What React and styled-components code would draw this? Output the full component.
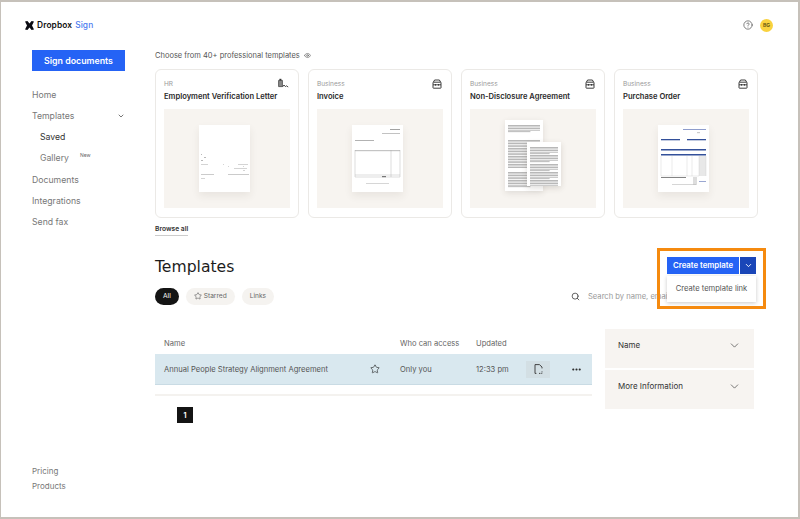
import React from "react"
import styled, { createGlobalStyle } from "styled-components"
import { ChevronDown, CircleHelp, Ellipsis, Eye, Search, Star } from "lucide-react"

const cards = [
  { category: "HR", title: "Employment Verification Letter", icon: "hr", doc: "letter" },
  { category: "Business", title: "Invoice", icon: "bag", doc: "invoice" },
  { category: "Business", title: "Non-Disclosure Agreement", icon: "bag", doc: "nda" },
  { category: "Business", title: "Purchase Order", icon: "bag", doc: "order" },
]

const App = () => {
  return (
    <Page>
      <GlobalStyle />
      <Header>
        <Logo>
          <LogoMark />
          <LogoName>Dropbox</LogoName>
          <LogoSign>Sign</LogoSign>
        </Logo>
        <HeaderRight>
          <CircleHelp size={10} strokeWidth={1.6} color="#444" />
          <Avatar>BG</Avatar>
        </HeaderRight>
      </Header>

      <Body>
        <Sidebar>
          <SignButton>Sign documents</SignButton>
          <Nav>
            <NavItem>Home</NavItem>
            <NavItem>
              Templates
              <NavChevron>
                <ChevronDown size={8} strokeWidth={2.2} color="#444" />
              </NavChevron>
            </NavItem>
            <NavItem $sub $active>Saved</NavItem>
            <NavItem $sub>
              Gallery<NewTag>New</NewTag>
            </NavItem>
            <NavItem>Documents</NavItem>
            <NavItem>Integrations</NavItem>
            <NavItem>Send fax</NavItem>
          </Nav>
          <SideFooter>
            <FootLink>Pricing</FootLink>
            <FootLink>Products</FootLink>
          </SideFooter>
        </Sidebar>

        <Main>
          <Intro>
            Choose from 40+ professional templates
            <Eye size={7} strokeWidth={2} color="#555" />
          </Intro>
          <Cards>
            {cards.map((card) => (
              <Card key={card.title}>
                <CardTop>
                  <Category>{card.category}</Category>
                  {card.icon === "hr" ? <HrIcon /> : <BagIcon />}
                </CardTop>
                <CardTitle>{card.title}</CardTitle>
                <Preview>
                  {card.doc === "letter" && <LetterDoc />}
                  {card.doc === "invoice" && <InvoiceDoc />}
                  {card.doc === "nda" && <NdaDocs />}
                  {card.doc === "order" && <OrderDoc />}
                </Preview>
              </Card>
            ))}
          </Cards>
          <BrowseRow>
            <BrowseAll>Browse all</BrowseAll>
          </BrowseRow>

          <TitleRow>
            <PageTitle>Templates</PageTitle>
            <CreateGroup>
              <CreateButton>Create template</CreateButton>
              <CreateToggle>
                <ChevronDown size={9} strokeWidth={2.4} color="#fff" />
              </CreateToggle>
              <CreateMenu>Create template link</CreateMenu>
              <Highlight />
            </CreateGroup>
          </TitleRow>

          <FilterRow>
            <Pills>
              <Pill $active>All</Pill>
              <Pill>
                <Star size={8} strokeWidth={1.8} color="#555" />
                Starred
              </Pill>
              <Pill>Links</Pill>
            </Pills>
            <SearchBox>
              <Search size={9} strokeWidth={2.2} color="#444" />
              <SearchText>Search by name, email</SearchText>
            </SearchBox>
          </FilterRow>

          <Content>
            <TableArea>
              <TableHead>
                <NameCol>Name</NameCol>
                <StarCol />
                <AccessCol>Who can access</AccessCol>
                <UpdatedCol>Updated</UpdatedCol>
              </TableHead>
              <TableRow>
                <NameCol>Annual People Strategy Alignment Agreement</NameCol>
                <StarCol>
                  <Star size={10} strokeWidth={1.5} color="#222" />
                </StarCol>
                <AccessCol>Only you</AccessCol>
                <UpdatedCol>12:33 pm</UpdatedCol>
                <FileButton>
                  <FileIcon />
                </FileButton>
                <MoreCol>
                  <Ellipsis size={11} strokeWidth={2.6} color="#222" />
                </MoreCol>
              </TableRow>
              <TableEnd />
              <Pager>
                <PageNum>1</PageNum>
              </Pager>
            </TableArea>
            <Details>
              <DetailPanel>
                Name
                <ChevronDown size={13} strokeWidth={1.2} color="#333" />
              </DetailPanel>
              <DetailPanel>
                More Information
                <ChevronDown size={13} strokeWidth={1.2} color="#333" />
              </DetailPanel>
            </Details>
          </Content>
        </Main>
      </Body>
    </Page>
  )
}

export default App

const LogoMark = () => (
  <svg width="9" height="9" viewBox="0 0 9 9">
    <path fill="#0b0b12" d="M0 .6 2.4 0l2.1 2.4L6.6 0 9 .6 7 4.5 9 8.4 6.6 9 4.5 6.6 2.4 9 0 8.4 2 4.5z" />
  </svg>
)

const HrIcon = () => (
  <svg width="11" height="11" viewBox="0 0 11 11" fill="none" stroke="#333" strokeWidth=".9">
    <path d="M.6 2.4h3.8v6.2H.6z" fill="#8a8a8a" stroke="#555" />
    <path d="M1.4 .8h2v1.6h-2z" fill="#333" stroke="none" />
    <path d="M4.6 8.8 6 7l1.4 1.6 1-.8 1.8 1.2" />
  </svg>
)

const BagIcon = () => (
  <svg width="10" height="10" viewBox="0 0 10 10" fill="none" stroke="#333" strokeWidth=".95">
    <path d="M1.4 3.2 2.6 1h4.8l1.2 2.2" />
    <rect x="1" y="3.2" width="8" height="6" rx=".5" />
    <path d="M1 5.8h8M3.5 5v1.6M6.5 5v1.6" />
  </svg>
)

const FileIcon = () => (
  <svg width="9" height="10" viewBox="0 0 9 10" fill="none" stroke="#333" strokeWidth=".9">
    <path d="M1 9.4V.6h4.4L8 3v1.4" />
    <path d="M1 9.4h1.4M5 9.4h3V7" strokeDasharray="1.4 1" />
  </svg>
)

const LetterDoc = () => (
  <DocSheet>
    <svg width="51" height="67" viewBox="0 0 51 67" fill="#a8a8a8">
      <rect x="2" y="29" width="1" height=".8" />
      <rect x="5" y="32" width="2" height=".8" />
      <rect x="2" y="35" width="2" height=".8" />
      <rect x="2" y="39" width="7" height=".5" />
      <rect x="24" y="39" width="1" height=".5" />
      <rect x="39" y="39" width="10" height=".5" />
      <rect x="29" y="41" width="1" height=".5" />
      <rect x="35" y="43" width="13" height=".5" />
      <rect x="44" y="41" width="1" height=".5" />
      <rect x="44" y="45" width="2" height=".5" />
      <rect x="2" y="49" width="13" height=".6" />
      <rect x="29" y="49" width="21" height=".6" />
      <rect x="2" y="53" width="4" height=".5" />
    </svg>
  </DocSheet>
)

const InvoiceDoc = () => (
  <DocSheet>
    <svg width="51" height="67" viewBox="0 0 51 67" fill="none" stroke="#aaa" strokeWidth=".4">
      <rect x="38" y="4" width="10" height=".9" fill="#999" stroke="none" />
      <rect x="30" y="8" width="18" height=".9" fill="#bbb" stroke="none" />
      <rect x="3" y="15" width="19" height=".9" fill="#aaa" stroke="none" />
      <rect x="3" y="25" width="45" height="1.2" fill="#c4c4c4" stroke="none" />
      <path d="M3 25v27h45V25M39 25v27M3 50h45" />
      <rect x="30" y="51" width="4" height="1.2" fill="#777" stroke="none" />
      <rect x="14" y="58" width="23" height=".7" fill="#c4c4c4" stroke="none" />
    </svg>
  </DocSheet>
)

const textLines = (count, y0, w) =>
  Array.from({ length: count }, (_, i) => (
    <rect key={i} x="3" y={y0 + i * 1.6} width={i % 5 === 4 ? w * 0.7 : w} height=".7" />
  ))

const NdaDocs = () => (
  <NdaStack>
    <NdaSheet>
      <svg width="38" height="71" viewBox="0 0 38 71" fill="#9a9a9a">
        {textLines(5, 5, 32)}
        {textLines(18, 20, 32)}
        {textLines(10, 52, 32)}
      </svg>
    </NdaSheet>
    <NdaSheetFront>
      <svg width="34" height="44" viewBox="0 0 34 44" fill="#9a9a9a">
        {textLines(10, 5, 28)}
        {textLines(14, 22, 28)}
      </svg>
    </NdaSheetFront>
  </NdaStack>
)

const OrderDoc = () => (
  <DocSheet>
    <svg width="51" height="67" viewBox="0 0 51 67">
      <rect x="25" y="4" width="23" height="1" fill="#8f9dcc" />
      <rect x="39" y="7" width="3" height="1.2" fill="#ccc" />
      <rect x="3" y="14" width="19" height="1.3" fill="#33509a" />
      <rect x="29" y="14" width="19" height="1.3" fill="#33509a" />
      <rect x="3" y="24" width="45" height="1.5" fill="#33509a" />
      <rect x="3" y="29" width="45" height="1.5" fill="#33509a" />
      <rect x="41" y="31" width="7" height="20" fill="#e8e8e8" />
      <path d="M3 31v20M14 31v20M29 31v20M34 31v20M41 31v20M48 31v20M3 51h38" stroke="#c4c4c4" strokeWidth=".35" fill="none" />
      <rect x="3" y="52" width="25" height=".9" fill="#777" />
      <rect x="35" y="52" width="4" height="8" fill="#ddd" />
      <rect x="41" y="56" width="7" height=".9" fill="#8f9dcc" />
      <rect x="14" y="59" width="24" height=".6" fill="#bbb" />
    </svg>
  </DocSheet>
)

const GlobalStyle = createGlobalStyle`
  html, body {
    margin: 0;
    padding: 0;
    background: #fff;
  }
  * {
    box-sizing: border-box;
  }
  body {
    font-family: Inter, "Liberation Sans", sans-serif;
    color: #333;
  }
`

const Page = styled.div`
  width: 800px;
  height: 519px;
  border: 1px solid #c6c1ba;
  border-width: 2px 2px 2px 1px;
  display: flex;
  flex-direction: column;
  overflow: hidden;
  background: #fff;
`

const Header = styled.header`
  height: 46px;
  flex: none;
  display: flex;
  align-items: center;
  justify-content: space-between;
  padding: 0 25px 0 24px;
`

const Logo = styled.div`
  display: flex;
  align-items: center;
  gap: 3px;
  font-size: 8.4px;
  font-weight: 600;
  letter-spacing: 0.1px;
`

const LogoName = styled.span`
  color: #111;
`

const LogoSign = styled.span`
  color: #4d7cf0;
  font-weight: 500;
`

const HeaderRight = styled.div`
  display: flex;
  align-items: center;
  gap: 7px;
`

const Avatar = styled.div`
  width: 13px;
  height: 13px;
  border-radius: 50%;
  background: #f9d23f;
  color: #6b5a12;
  font-size: 5px;
  font-weight: 700;
  display: flex;
  align-items: center;
  justify-content: center;
`

const Body = styled.div`
  flex: 1;
  display: flex;
  min-height: 0;
`

const Sidebar = styled.aside`
  width: 154px;
  flex: none;
  padding: 2px 0 26px 31px;
  display: flex;
  flex-direction: column;
`

const SignButton = styled.button`
  width: 93px;
  height: 21px;
  border: 0;
  padding: 0;
  background: #2563f5;
  color: #fff;
  font-family: inherit;
  font-size: 8.8px;
  font-weight: 600;
`

const Nav = styled.nav`
  margin-top: 13.5px;
  display: flex;
  flex-direction: column;
`

const NavItem = styled.div`
  position: relative;
  width: 93px;
  height: 21.15px;
  display: flex;
  align-items: center;
  padding-left: ${(p) => (p.$sub ? "8px" : "0")};
  color: ${(p) => (p.$active ? "#333" : "#777")};
  font-size: 8.7px;
`

const NavChevron = styled.span`
  margin-left: auto;
  display: flex;
`

const NewTag = styled.span`
  margin: -6px 0 0 11px;
  font-size: 5px;
  color: #666;
`

const SideFooter = styled.div`
  margin-top: auto;
  display: flex;
  flex-direction: column;
  gap: 6px;
`

const FootLink = styled.div`
  color: #777;
  font-size: 8px;
  line-height: 9px;
`

const Main = styled.main`
  flex: 1;
  min-width: 0;
`

const Intro = styled.div`
  height: 21px;
  display: flex;
  align-items: flex-start;
  gap: 4px;
  font-size: 7.5px;
  line-height: 15px;
  color: #555;

  svg {
    margin-top: 4px;
  }
`

const Cards = styled.div`
  display: flex;
  gap: 9px;
`

const Card = styled.article`
  width: 144px;
  height: 149px;
  border: 1px solid #ebe9e6;
  border-radius: 6px;
  padding: 8px 8px;
`

const CardTop = styled.div`
  height: 11px;
  display: flex;
  align-items: center;
  justify-content: space-between;
  padding-right: 1px;
`

const Category = styled.div`
  color: #999;
  font-size: 6.5px;
`

const CardTitle = styled.h3`
  margin: 1px 0 0;
  font-size: 7.6px;
  line-height: 13px;
  font-weight: 600;
  color: #2a2a2a;
  white-space: nowrap;
`

const Preview = styled.div`
  margin-top: 6px;
  height: 99px;
  background: #f7f4f0;
  display: flex;
  align-items: center;
  justify-content: center;
`

const DocSheet = styled.div`
  width: 51px;
  height: 67px;
  margin-left: -6px;
  background: #fff;
  box-shadow: 0 4px 8px rgba(60, 50, 40, 0.08);

  svg {
    display: block;
  }
`

const NdaStack = styled.div`
  position: relative;
  width: 56px;
  height: 72px;
  margin-top: -5px;
`

const NdaSheet = styled.div`
  width: 38px;
  height: 71px;
  background: #fff;
  box-shadow: 0 2px 6px rgba(60, 50, 40, 0.12);
`

const NdaSheetFront = styled.div`
  position: absolute;
  right: 0;
  top: 22px;
  width: 34px;
  height: 44px;
  background: #fff;
  box-shadow: 0 2px 6px rgba(60, 50, 40, 0.16);
`

const BrowseRow = styled.div`
  height: 27px;
  padding-top: 7px;
  display: flex;
  align-items: flex-start;
`

const BrowseAll = styled.span`
  font-size: 6.7px;
  line-height: 9px;
  font-weight: 600;
  color: #333;
  border-bottom: 1px solid #ccc;
  padding-bottom: 1px;
`

const TitleRow = styled.div`
  height: 30px;
  margin-top: 5px;
  display: flex;
  align-items: center;
  justify-content: space-between;
  padding-right: 42px;
`

const PageTitle = styled.h1`
  margin: 4px 0 0;
  font-family: "DejaVu Sans", sans-serif;
  font-size: 15.6px;
  font-weight: 400;
  color: #1c1c1c;
`

const CreateGroup = styled.div`
  position: relative;
  display: flex;
  gap: 1px;
`

const CreateButton = styled.button`
  width: 72px;
  height: 17px;
  border: 0;
  padding: 0;
  background: #2563f5;
  color: #fff;
  font-family: inherit;
  font-size: 7.8px;
  font-weight: 600;
  white-space: nowrap;
`

const CreateToggle = styled.button`
  width: 16px;
  height: 17px;
  border: 0;
  padding: 0;
  background: #1a46b8;
  display: flex;
  align-items: center;
  justify-content: center;
`

const CreateMenu = styled.div`
  position: absolute;
  z-index: 2;
  top: 19px;
  left: 0;
  width: 89px;
  height: 26px;
  background: #fff;
  box-shadow: 0 1px 4px rgba(0, 0, 0, 0.22);
  color: #555;
  font-size: 7.6px;
  display: flex;
  align-items: center;
  justify-content: center;
  white-space: nowrap;
`

const Highlight = styled.div`
  position: absolute;
  z-index: 3;
  top: -9px;
  left: -10px;
  width: 109px;
  height: 61px;
  border: 3px solid #f58a0f;
  pointer-events: none;
`

const FilterRow = styled.div`
  height: 18px;
  margin-top: 7px;
  display: flex;
  align-items: center;
  justify-content: space-between;
`

const Pills = styled.div`
  display: flex;
  gap: 7px;
`

const Pill = styled.div`
  height: 17px;
  padding: 0 8px;
  border-radius: 9px;
  background: ${(p) => (p.$active ? "#141414" : "#f5f3f0")};
  color: ${(p) => (p.$active ? "#fff" : "#666")};
  font-size: 6.6px;
  display: flex;
  align-items: center;
  gap: 2px;
`

const SearchBox = styled.div`
  width: 228px;
  display: flex;
  align-items: center;
  gap: 8px;
  overflow: hidden;
  padding-left: 1px;
`

const SearchText = styled.span`
  color: #999;
  font-size: 7.6px;
  white-space: nowrap;
`

const Content = styled.div`
  margin-top: 24px;
  display: flex;
  gap: 13px;
`

const TableArea = styled.div`
  width: 437px;
  flex: none;
  padding-top: 5px;
`

const TableHead = styled.div`
  height: 20px;
  display: flex;
  align-items: center;
  padding: 0 0 2px 9px;
  font-size: 7.6px;
  color: #666;
`

const TableRow = styled.div`
  height: 31px;
  display: flex;
  align-items: center;
  padding-left: 9px;
  background: #d9e8ef;
  border-bottom: 1px solid #c9dbe4;
  font-size: 7.6px;
  color: #555;
`

const NameCol = styled.div`
  width: 206px;
  white-space: nowrap;
`

const StarCol = styled.div`
  width: 30px;
  display: flex;
`

const AccessCol = styled.div`
  width: 76px;
  white-space: nowrap;
`

const UpdatedCol = styled.div`
  width: 50px;
  white-space: nowrap;
`

const FileButton = styled.div`
  width: 24px;
  height: 17px;
  background: #d3dfe4;
  display: flex;
  align-items: center;
  justify-content: center;
`

const MoreCol = styled.div`
  margin-left: 21px;
  display: flex;
`

const TableEnd = styled.div`
  height: 2px;
  margin-top: 9px;
  background: #f4f2ef;
`

const Pager = styled.div`
  padding: 11px 0 0 22px;
`

const PageNum = styled.div`
  width: 16px;
  height: 16px;
  background: #141414;
  color: #fff;
  font-size: 7px;
  font-weight: 700;
  display: flex;
  align-items: center;
  justify-content: center;
`

const Details = styled.div`
  width: 149px;
  display: flex;
  flex-direction: column;
  gap: 2px;
`

const DetailPanel = styled.div`
  height: 39px;
  padding: 0 13px 7px 13px;
  background: #f7f4f1;
  font-size: 8px;
  color: #333;
  display: flex;
  align-items: center;
  justify-content: space-between;
`
